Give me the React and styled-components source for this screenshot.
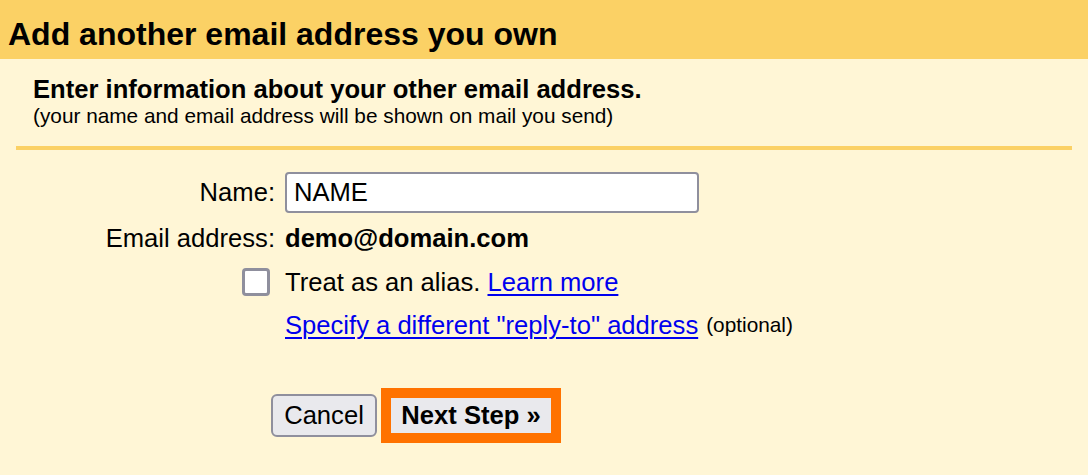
import React from "react";
import styled, { createGlobalStyle } from "styled-components";

const Global = createGlobalStyle`
  html, body { margin: 0; padding: 0; background: #fff6d6; }
  body { font-family: "Liberation Sans", Arial, sans-serif; color: #000; }
`;

const Page = styled.div`
  width: 1088px;
  height: 475px;
  background: #fff6d6;
  overflow: hidden;
`;

const Header = styled.div`
  height: 59px;
  box-sizing: border-box;
  background: #fbd165;
  padding: 16px 8px 0;
`;

const Title = styled.h1`
  margin: 0;
  font-size: 32px;
  line-height: 37px;
  font-weight: bold;
`;

const Intro = styled.div`
  padding: 15px 0 0 33px;
`;

const SubHeading = styled.div`
  font-size: 25.6px;
  line-height: 30px;
  font-weight: bold;
`;

const Note = styled.div`
  font-size: 20.8px;
  line-height: 24px;
`;

const Separator = styled.div`
  height: 4px;
  margin: 18px 16px 0;
  background: #fbd165;
`;

const Form = styled.div`
  display: grid;
  grid-template-columns: 275px 1fr;
  column-gap: 10px;
  row-gap: 0;
  margin-top: 21px;
  font-size: 25.6px;
`;

const Label = styled.div`
  text-align: right;
  display: flex;
  align-items: center;
  justify-content: flex-end;
  height: ${(p) => p.$h || 44}px;
  padding-right: ${(p) => p.$pr || 0}px;
`;

const Value = styled.div`
  display: flex;
  align-items: center;
  height: ${(p) => p.$h || 44}px;
  font-weight: ${(p) => (p.$bold ? "bold" : "normal")};
`;

const TextInput = styled.input`
  width: 414px;
  height: 41px;
  box-sizing: border-box;
  border: 2px solid #8f8f9d;
  border-radius: 4px;
  background: #fff;
  font-family: "Liberation Sans", Arial, sans-serif;
  font-size: 25.6px;
  padding: 0 7px;
  color: #000;
  outline: none;
`;

const Checkbox = styled.span`
  display: inline-block;
  width: 28px;
  height: 28px;
  box-sizing: border-box;
  border: 3.5px solid #8f8f9d;
  border-radius: 4px;
  background: #fff;
`;

const Link = styled.a`
  color: #0000ee;
  text-decoration: underline;
  text-underline-offset: 3px;
  text-decoration-thickness: 2px;
  cursor: pointer;
`;

const Small = styled.span`
  font-size: 20.8px;
  margin-left: 8px;
`;

const Buttons = styled.div`
  display: flex;
  align-items: center;
  gap: 4px;
  margin: 39px 0 0 271px;
`;

const Button = styled.button`
  font-family: "Liberation Sans", Arial, sans-serif;
  font-size: 25.6px;
  color: #000;
  background: #e9e9ed;
  box-sizing: border-box;
  height: ${(p) => (p.$primary ? 35 : 43)}px;
  width: ${(p) => (p.$primary ? 160 : 106)}px;
  padding: 0;
  font-weight: ${(p) => (p.$primary ? "bold" : "normal")};
  border: ${(p) => (p.$primary ? "none" : "2px solid #8f8f9d")};
  border-radius: ${(p) => (p.$primary ? 0 : 6)}px;
`;

const Highlight = styled.div`
  border: 10px solid #ff7200;
  display: flex;
`;

export default function App() {
  return (
    <Page>
      <Global />
      <Header>
        <Title>Add another email address you own</Title>
      </Header>
      <Intro>
        <SubHeading>Enter information about your other email address.</SubHeading>
        <Note>(your name and email address will be shown on mail you send)</Note>
      </Intro>
      <Separator />
      <Form>
        <Label $h={42}>Name:</Label>
        <Value $h={42}>
          <TextInput defaultValue="NAME" />
        </Value>
        <Label $h={50}>Email address:</Label>
        <Value $h={50} $bold>demo@domain.com</Value>
        <Label $h={38} $pr={5}>
          <Checkbox />
        </Label>
        <Value $h={38}>
          Treat as an alias.&nbsp;<Link>Learn more</Link>
        </Value>
        <Label $h={48} />
        <Value $h={48}>
          <Link>Specify a different "reply-to" address</Link>
          <Small>(optional)</Small>
        </Value>
      </Form>
      <Buttons>
        <Button>Cancel</Button>
        <Highlight>
          <Button $primary>Next Step »</Button>
        </Highlight>
      </Buttons>
    </Page>
  );
}
